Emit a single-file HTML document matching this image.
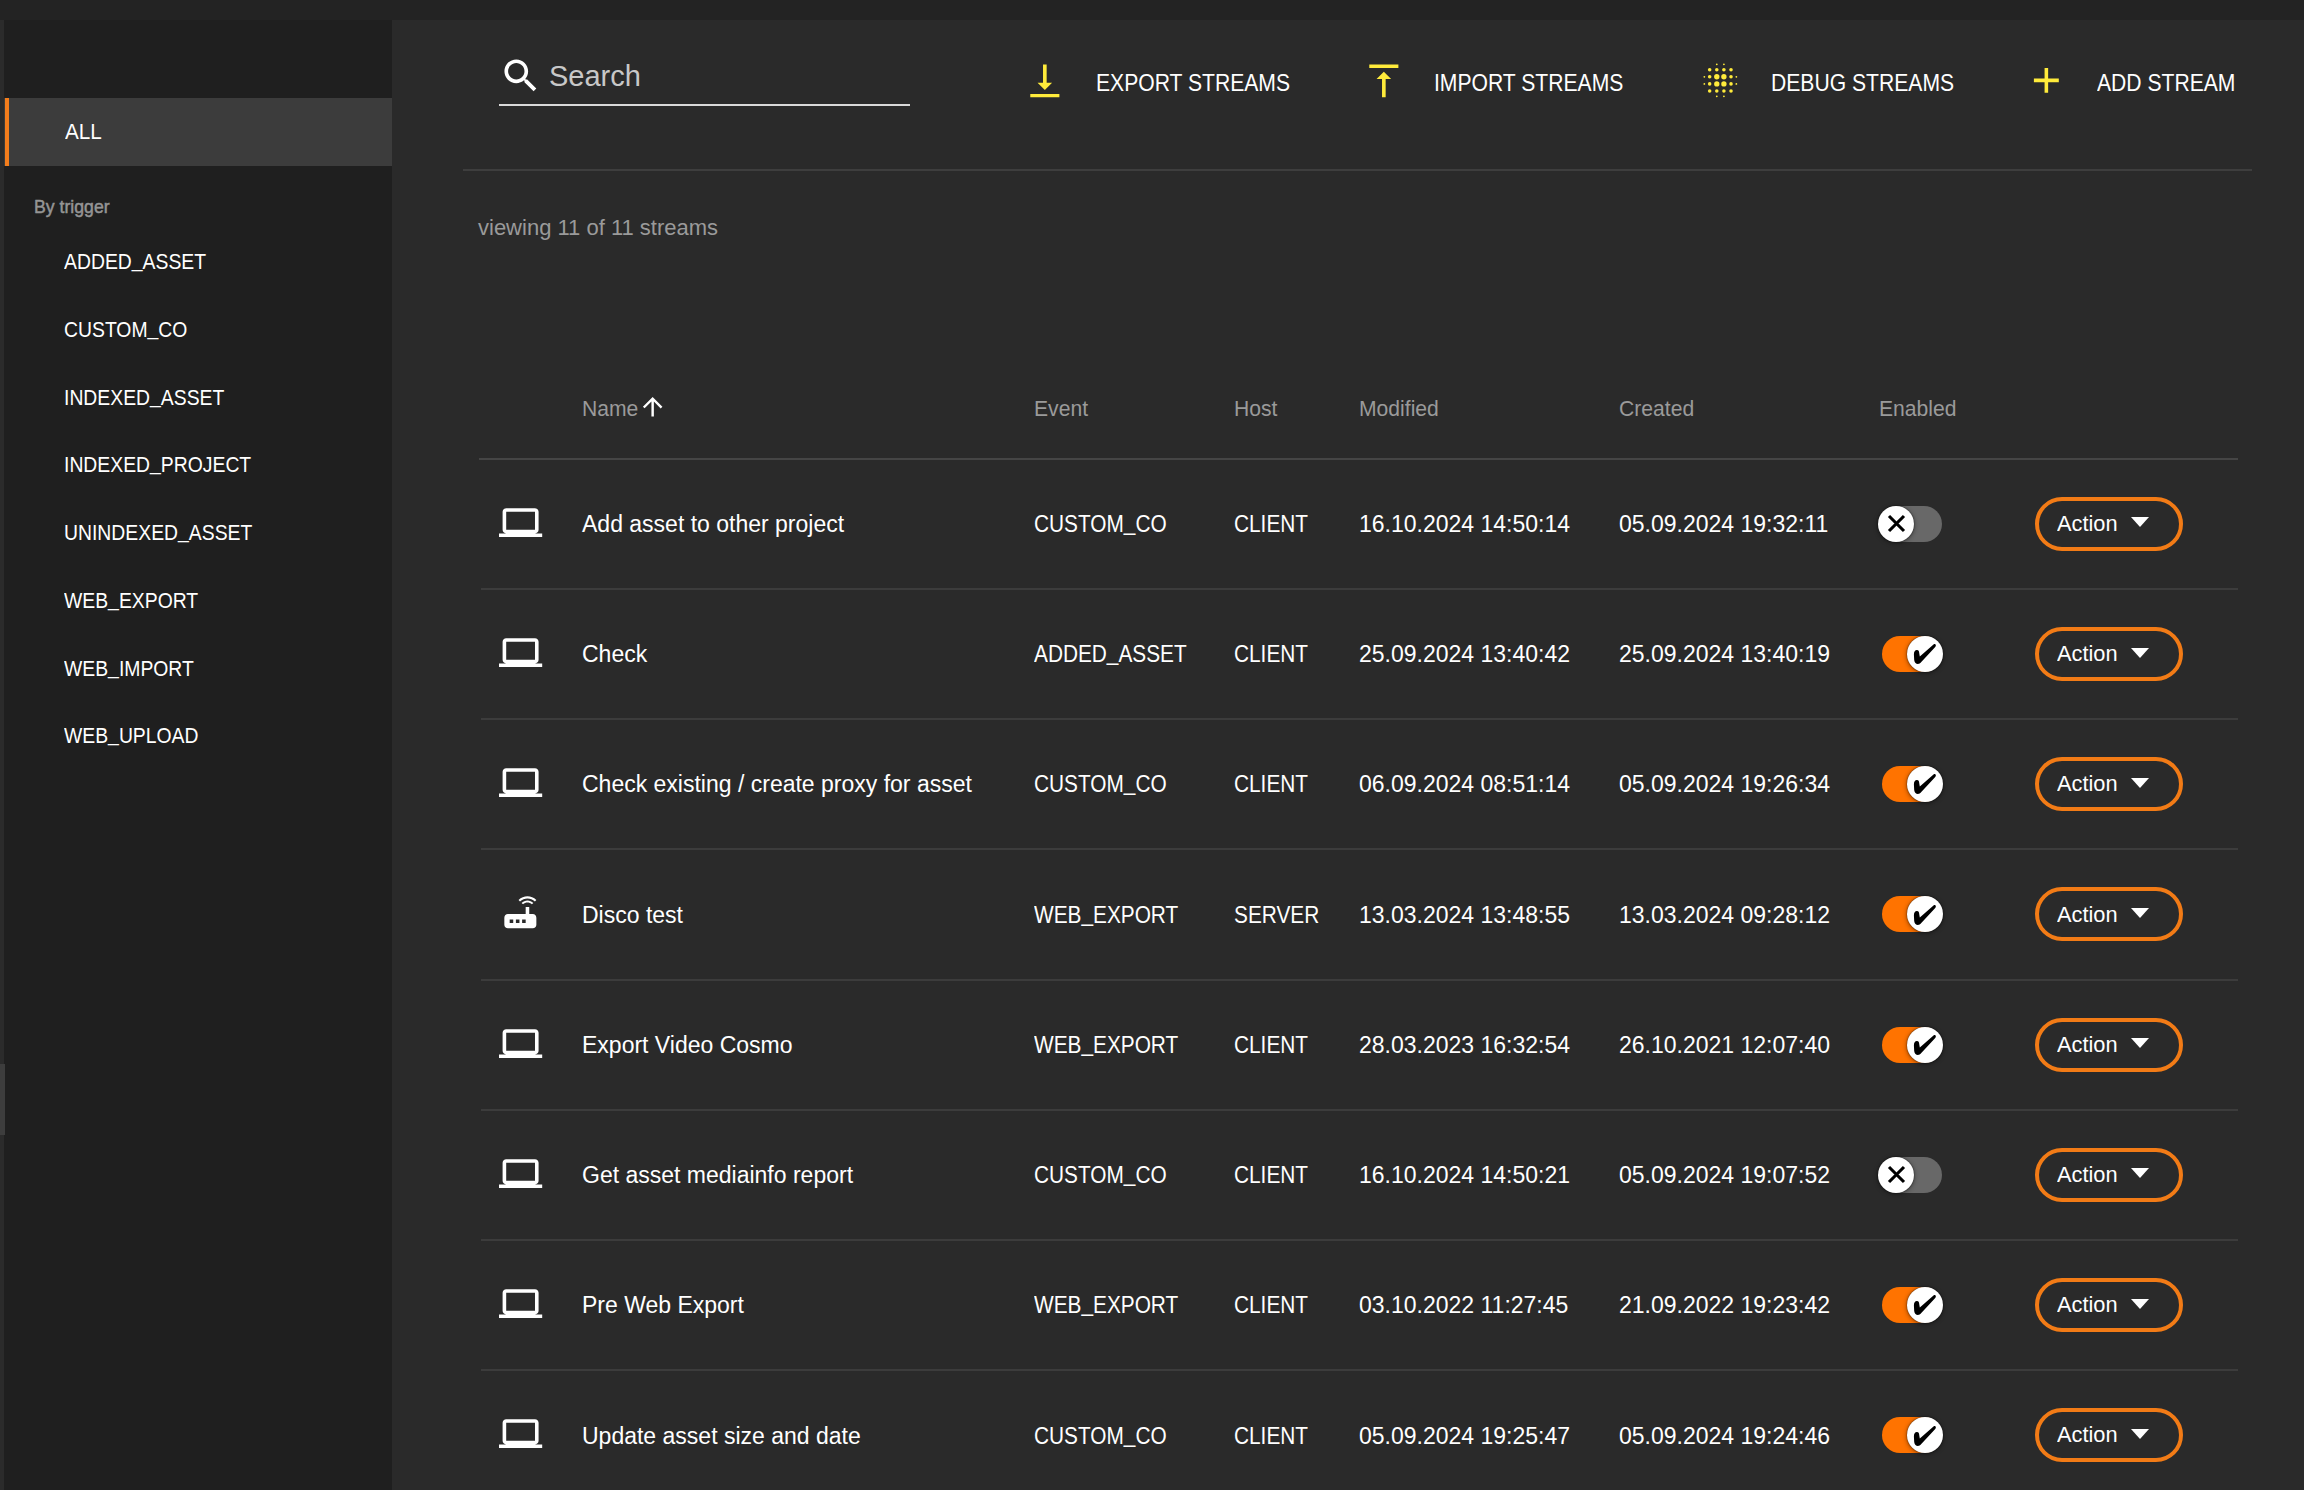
<!DOCTYPE html>
<html><head><meta charset="utf-8"><style>
html,body{margin:0;padding:0;width:2304px;height:1490px;overflow:hidden;background:#232323;font-family:"Liberation Sans", sans-serif;}
.a{position:absolute;}
.t{position:absolute;white-space:pre;line-height:1;}
svg{position:absolute;overflow:visible;}
</style></head><body>
<div class="a" style="left:0;top:20px;width:4px;height:1470px;background:#2b2b2b"></div>
<div class="a" style="left:4px;top:20px;width:388px;height:1470px;background:#1f1f1f"></div>
<div class="a" style="left:392px;top:20px;width:1912px;height:1470px;background:#2a2a2a"></div>
<div class="a" style="left:0;top:1064px;width:5px;height:71px;background:#3d3d3d"></div>
<div class="a" style="left:4px;top:98px;width:388px;height:68px;background:#3c3c3c"></div>
<div class="a" style="left:4.8px;top:98px;width:4.4px;height:68px;background:#f37d1c"></div>
<div class="t " style="left:64.5px;top:120.98px;font-size:22px;color:#fff;transform:scaleX(0.94);transform-origin:0 0;">ALL</div>
<div class="t " style="left:34px;top:197.42px;font-size:19px;color:#959595;transform:scaleX(0.93);transform-origin:0 0;-webkit-text-stroke:0.5px #959595;">By trigger</div>
<div class="t " style="left:64px;top:251.18px;font-size:22px;color:#fff;transform:scaleX(0.88);transform-origin:0 0;">ADDED<span style="position:relative;top:-2px">_</span>ASSET</div>
<div class="t " style="left:64px;top:318.93px;font-size:22px;color:#fff;transform:scaleX(0.88);transform-origin:0 0;">CUSTOM<span style="position:relative;top:-2px">_</span>CO</div>
<div class="t " style="left:64px;top:386.68px;font-size:22px;color:#fff;transform:scaleX(0.88);transform-origin:0 0;">INDEXED<span style="position:relative;top:-2px">_</span>ASSET</div>
<div class="t " style="left:64px;top:454.43px;font-size:22px;color:#fff;transform:scaleX(0.88);transform-origin:0 0;">INDEXED<span style="position:relative;top:-2px">_</span>PROJECT</div>
<div class="t " style="left:64px;top:522.18px;font-size:22px;color:#fff;transform:scaleX(0.88);transform-origin:0 0;">UNINDEXED<span style="position:relative;top:-2px">_</span>ASSET</div>
<div class="t " style="left:64px;top:589.93px;font-size:22px;color:#fff;transform:scaleX(0.88);transform-origin:0 0;">WEB<span style="position:relative;top:-2px">_</span>EXPORT</div>
<div class="t " style="left:64px;top:657.68px;font-size:22px;color:#fff;transform:scaleX(0.88);transform-origin:0 0;">WEB<span style="position:relative;top:-2px">_</span>IMPORT</div>
<div class="t " style="left:64px;top:725.43px;font-size:22px;color:#fff;transform:scaleX(0.88);transform-origin:0 0;">WEB<span style="position:relative;top:-2px">_</span>UPLOAD</div>
<svg style="left:498.8px;top:54.1px" width="43.7" height="43.7" viewBox="0 0 24 24"><path fill="#fff" d="M15.5 14h-.79l-.28-.27C15.41 12.59 16 11.11 16 9.5 16 5.910 13.09 3 9.5 3S3 5.91 3 9.5 5.91 16 9.5 16c1.61 0 3.09-.59 4.23-1.57l.27.28v.79l5 4.99L20.49 19l-4.99-5zm-6 0C7.01 14 5 11.99 5 9.5S7.01 5 9.5 5 14 7.01 14 9.5 11.99 14 9.5 14z"/></svg>
<div class="t " style="left:549px;top:62.45px;font-size:29px;color:#c8c8c8;">Search</div>
<div class="a" style="left:499px;top:104px;width:411px;height:2px;background:#d9d9d9"></div>
<svg style="left:1023.2px;top:58.7px" width="43.68" height="43.68" viewBox="0 0 24 24"><path fill="#ffeb3b" d="M16 13h-3V3h-2v10H8l4 4 4-4zM4 19.2v1.8h16v-1.8H4z"/></svg>
<div class="t " style="left:1096px;top:71.08px;font-size:24px;color:#fff;transform:scaleX(0.88);transform-origin:0 0;">EXPORT STREAMS</div>
<svg style="left:1362.1px;top:58.9px" width="43.68" height="43.68" viewBox="0 0 24 24"><path fill="#ffeb3b" d="M8 11h3v10h2V11h3l-4-4-4 4zM4 3v2h16V3H4z"/></svg>
<div class="t " style="left:1434px;top:71.08px;font-size:24px;color:#fff;transform:scaleX(0.88);transform-origin:0 0;">IMPORT STREAMS</div>
<svg style="left:1698.7px;top:58.8px" width="42.7" height="42.7" viewBox="0 0 24 24"><g fill="#ffeb3b"><circle cx="3" cy="10" r="0.5"/><circle cx="3" cy="14" r="0.5"/><circle cx="21" cy="10" r="0.5"/><circle cx="21" cy="14" r="0.5"/><circle cx="10" cy="3" r="0.5"/><circle cx="14" cy="3" r="0.5"/><circle cx="10" cy="21" r="0.5"/><circle cx="14" cy="21" r="0.5"/><circle cx="6" cy="6" r="1"/><circle cx="6" cy="10" r="1"/><circle cx="6" cy="14" r="1"/><circle cx="6" cy="18" r="1"/><circle cx="10" cy="6" r="1"/><circle cx="14" cy="6" r="1"/><circle cx="18" cy="6" r="1"/><circle cx="18" cy="10" r="1"/><circle cx="18" cy="14" r="1"/><circle cx="18" cy="18" r="1"/><circle cx="10" cy="18" r="1"/><circle cx="14" cy="18" r="1"/><circle cx="10" cy="10" r="1.5"/><circle cx="14" cy="10" r="1.5"/><circle cx="10" cy="14" r="1.5"/><circle cx="14" cy="14" r="1.5"/></g></svg>
<div class="t " style="left:1771px;top:71.08px;font-size:24px;color:#fff;transform:scaleX(0.88);transform-origin:0 0;">DEBUG STREAMS</div>
<svg style="left:2024.8px;top:59.3px" width="42.72" height="42.72" viewBox="0 0 24 24"><path fill="#ffeb3b" d="M19 13h-6v6h-2v-6H5v-2h6V5h2v6h6v2z"/></svg>
<div class="t " style="left:2097px;top:71.08px;font-size:24px;color:#fff;transform:scaleX(0.88);transform-origin:0 0;">ADD STREAM</div>
<div class="a" style="left:463px;top:169px;width:1789px;height:1.5px;background:#3e3e3e"></div>
<div class="t " style="left:478px;top:217.08px;font-size:22px;color:#9a9a9a;">viewing 11 of 11 streams</div>
<div class="t " style="left:582px;top:398.38px;font-size:22px;color:#9a9a9a;transform:scaleX(0.96);transform-origin:0 0;">Name</div>
<svg style="left:638.3px;top:392.4px" width="29.3" height="29.3" viewBox="0 0 24 24"><path fill="#fff" d="M4 12l1.41 1.41L11 7.83V20h2V7.83l5.58 5.59L20 12l-8-8-8 8z"/></svg>
<div class="t " style="left:1034px;top:398.38px;font-size:22px;color:#9a9a9a;transform:scaleX(0.96);transform-origin:0 0;">Event</div>
<div class="t " style="left:1234px;top:398.38px;font-size:22px;color:#9a9a9a;transform:scaleX(0.96);transform-origin:0 0;">Host</div>
<div class="t " style="left:1359px;top:398.38px;font-size:22px;color:#9a9a9a;transform:scaleX(0.96);transform-origin:0 0;">Modified</div>
<div class="t " style="left:1619px;top:398.38px;font-size:22px;color:#9a9a9a;transform:scaleX(0.96);transform-origin:0 0;">Created</div>
<div class="t " style="left:1879px;top:398.38px;font-size:22px;color:#9a9a9a;transform:scaleX(0.96);transform-origin:0 0;">Enabled</div>
<div class="a" style="left:479px;top:457.5px;width:1759px;height:2px;background:#454545"></div>
<svg style="left:498.7px;top:500.70px" width="43.2" height="43.2" viewBox="0 0 24 24"><path fill="#fff" d="M20 18c1.1 0 1.99-.9 1.99-2L22 6c0-1.1-.9-2-2-2H4c-1.1 0-2 .9-2 2v10c0 1.1.9 2 2 2H0v2h24v-2h-4zM4 6h16v10H4V6z"/></svg>
<div class="t " style="left:582px;top:513.03px;font-size:23px;color:#fff;">Add asset to other project</div>
<div class="t " style="left:1034px;top:513.03px;font-size:23px;color:#fff;transform:scaleX(0.905);transform-origin:0 0;">CUSTOM<span style="position:relative;top:-2px">_</span>CO</div>
<div class="t " style="left:1234px;top:513.03px;font-size:23px;color:#fff;transform:scaleX(0.905);transform-origin:0 0;">CLIENT</div>
<div class="t " style="left:1359px;top:513.03px;font-size:23px;color:#fff;">16.10.2024 14:50:14</div>
<div class="t " style="left:1619px;top:513.03px;font-size:23px;color:#fff;">05.09.2024 19:32:11</div>
<div class="a" style="left:1882px;top:505.80px;width:60px;height:36px;border-radius:18px;background:#686868"></div>
<div class="a" style="left:1878px;top:505.80px;width:36px;height:36px;border-radius:18px;background:#fff;box-shadow:0 1px 5px rgba(0,0,0,.45),0 0 1.5px rgba(0,0,0,.8)"></div>
<svg style="left:1888px;top:515.30px" width="17" height="17" viewBox="0 0 17 17"><path stroke="#000" stroke-width="3.1" d="M1 1L16 16M16 1L1 16"/></svg>
<div class="a" style="left:2035px;top:496.80px;width:140px;height:46px;border:4px solid #f27b16;border-radius:27px"></div>
<div class="t " style="left:2057px;top:512.88px;font-size:22px;color:#fff;transform:scaleX(0.99);transform-origin:0 0;">Action</div>
<svg style="left:2130.5px;top:517.30px" width="18" height="10" viewBox="0 0 18 10"><path fill="#fff" d="M0 0h18L9 10z"/></svg>
<div class="a" style="left:481px;top:588.00px;width:1757px;height:2px;background:#3c3c3c"></div>
<svg style="left:498.7px;top:630.93px" width="43.2" height="43.2" viewBox="0 0 24 24"><path fill="#fff" d="M20 18c1.1 0 1.99-.9 1.99-2L22 6c0-1.1-.9-2-2-2H4c-1.1 0-2 .9-2 2v10c0 1.1.9 2 2 2H0v2h24v-2h-4zM4 6h16v10H4V6z"/></svg>
<div class="t " style="left:582px;top:643.26px;font-size:23px;color:#fff;">Check</div>
<div class="t " style="left:1034px;top:643.26px;font-size:23px;color:#fff;transform:scaleX(0.905);transform-origin:0 0;">ADDED<span style="position:relative;top:-2px">_</span>ASSET</div>
<div class="t " style="left:1234px;top:643.26px;font-size:23px;color:#fff;transform:scaleX(0.905);transform-origin:0 0;">CLIENT</div>
<div class="t " style="left:1359px;top:643.26px;font-size:23px;color:#fff;">25.09.2024 13:40:42</div>
<div class="t " style="left:1619px;top:643.26px;font-size:23px;color:#fff;">25.09.2024 13:40:19</div>
<div class="a" style="left:1882px;top:636.03px;width:60px;height:36px;border-radius:18px;background:#ff7300"></div>
<div class="a" style="left:1907px;top:636.03px;width:36px;height:36px;border-radius:18px;background:#fff;box-shadow:0 1px 5px rgba(0,0,0,.45),0 0 1.5px rgba(0,0,0,.8)"></div>
<svg style="left:1908px;top:638.13px" width="34" height="30" viewBox="0 0 34 30"><path fill="#000" d="M5.9 16.5C5.9 13.5 7 12 8.9 12 10.8 12 11.2 13.6 11.3 15.5L11.8 18.6 25.5 6.6C26.5 5.8 27.6 6 27.8 7 28 7.8 27.6 8.5 27 9.2L13.5 23.8C12.3 25.2 11 26 9.9 26 8 26 6.5 24.5 6.2 22Z"/></svg>
<div class="a" style="left:2035px;top:627.03px;width:140px;height:46px;border:4px solid #f27b16;border-radius:27px"></div>
<div class="t " style="left:2057px;top:643.11px;font-size:22px;color:#fff;transform:scaleX(0.99);transform-origin:0 0;">Action</div>
<svg style="left:2130.5px;top:647.53px" width="18" height="10" viewBox="0 0 18 10"><path fill="#fff" d="M0 0h18L9 10z"/></svg>
<div class="a" style="left:481px;top:718.23px;width:1757px;height:2px;background:#3c3c3c"></div>
<svg style="left:498.7px;top:761.16px" width="43.2" height="43.2" viewBox="0 0 24 24"><path fill="#fff" d="M20 18c1.1 0 1.99-.9 1.99-2L22 6c0-1.1-.9-2-2-2H4c-1.1 0-2 .9-2 2v10c0 1.1.9 2 2 2H0v2h24v-2h-4zM4 6h16v10H4V6z"/></svg>
<div class="t " style="left:582px;top:773.49px;font-size:23px;color:#fff;">Check existing / create proxy for asset</div>
<div class="t " style="left:1034px;top:773.49px;font-size:23px;color:#fff;transform:scaleX(0.905);transform-origin:0 0;">CUSTOM<span style="position:relative;top:-2px">_</span>CO</div>
<div class="t " style="left:1234px;top:773.49px;font-size:23px;color:#fff;transform:scaleX(0.905);transform-origin:0 0;">CLIENT</div>
<div class="t " style="left:1359px;top:773.49px;font-size:23px;color:#fff;">06.09.2024 08:51:14</div>
<div class="t " style="left:1619px;top:773.49px;font-size:23px;color:#fff;">05.09.2024 19:26:34</div>
<div class="a" style="left:1882px;top:766.26px;width:60px;height:36px;border-radius:18px;background:#ff7300"></div>
<div class="a" style="left:1907px;top:766.26px;width:36px;height:36px;border-radius:18px;background:#fff;box-shadow:0 1px 5px rgba(0,0,0,.45),0 0 1.5px rgba(0,0,0,.8)"></div>
<svg style="left:1908px;top:768.36px" width="34" height="30" viewBox="0 0 34 30"><path fill="#000" d="M5.9 16.5C5.9 13.5 7 12 8.9 12 10.8 12 11.2 13.6 11.3 15.5L11.8 18.6 25.5 6.6C26.5 5.8 27.6 6 27.8 7 28 7.8 27.6 8.5 27 9.2L13.5 23.8C12.3 25.2 11 26 9.9 26 8 26 6.5 24.5 6.2 22Z"/></svg>
<div class="a" style="left:2035px;top:757.26px;width:140px;height:46px;border:4px solid #f27b16;border-radius:27px"></div>
<div class="t " style="left:2057px;top:773.34px;font-size:22px;color:#fff;transform:scaleX(0.99);transform-origin:0 0;">Action</div>
<svg style="left:2130.5px;top:777.76px" width="18" height="10" viewBox="0 0 18 10"><path fill="#fff" d="M0 0h18L9 10z"/></svg>
<div class="a" style="left:481px;top:848.46px;width:1757px;height:2px;background:#3c3c3c"></div>
<svg style="left:498.8px;top:890.89px" width="42.7" height="42.7" viewBox="0 0 24 24"><path fill="#fff" d="M20.2 5.9l.8-.8C19.6 3.7 17.8 3 16 3s-3.6.7-5 2.1l.8.8C13 4.8 14.5 4.2 16 4.2s3 .6 4.2 1.7zm-.9.8c-.9-.9-2.1-1.4-3.3-1.4s-2.4.5-3.3 1.4l.8.8c.7-.7 1.6-1 2.5-1 .9 0 1.8.3 2.5 1l.8-.8zM19 13h-2V9h-2v4H5c-1.1 0-2 .9-2 2v4c0 1.1.9 2 2 2h14c1.1 0 2-.9 2-2v-4c0-1.1-.9-2-2-2zM8 18H6v-2h2v2zm3.5 0h-2v-2h2v2zm3.5 0h-2v-2h2v2z"/></svg>
<div class="t " style="left:582px;top:903.72px;font-size:23px;color:#fff;">Disco test</div>
<div class="t " style="left:1034px;top:903.72px;font-size:23px;color:#fff;transform:scaleX(0.905);transform-origin:0 0;">WEB<span style="position:relative;top:-2px">_</span>EXPORT</div>
<div class="t " style="left:1234px;top:903.72px;font-size:23px;color:#fff;transform:scaleX(0.905);transform-origin:0 0;">SERVER</div>
<div class="t " style="left:1359px;top:903.72px;font-size:23px;color:#fff;">13.03.2024 13:48:55</div>
<div class="t " style="left:1619px;top:903.72px;font-size:23px;color:#fff;">13.03.2024 09:28:12</div>
<div class="a" style="left:1882px;top:896.49px;width:60px;height:36px;border-radius:18px;background:#ff7300"></div>
<div class="a" style="left:1907px;top:896.49px;width:36px;height:36px;border-radius:18px;background:#fff;box-shadow:0 1px 5px rgba(0,0,0,.45),0 0 1.5px rgba(0,0,0,.8)"></div>
<svg style="left:1908px;top:898.59px" width="34" height="30" viewBox="0 0 34 30"><path fill="#000" d="M5.9 16.5C5.9 13.5 7 12 8.9 12 10.8 12 11.2 13.6 11.3 15.5L11.8 18.6 25.5 6.6C26.5 5.8 27.6 6 27.8 7 28 7.8 27.6 8.5 27 9.2L13.5 23.8C12.3 25.2 11 26 9.9 26 8 26 6.5 24.5 6.2 22Z"/></svg>
<div class="a" style="left:2035px;top:887.49px;width:140px;height:46px;border:4px solid #f27b16;border-radius:27px"></div>
<div class="t " style="left:2057px;top:903.57px;font-size:22px;color:#fff;transform:scaleX(0.99);transform-origin:0 0;">Action</div>
<svg style="left:2130.5px;top:907.99px" width="18" height="10" viewBox="0 0 18 10"><path fill="#fff" d="M0 0h18L9 10z"/></svg>
<div class="a" style="left:481px;top:978.69px;width:1757px;height:2px;background:#3c3c3c"></div>
<svg style="left:498.7px;top:1021.62px" width="43.2" height="43.2" viewBox="0 0 24 24"><path fill="#fff" d="M20 18c1.1 0 1.99-.9 1.99-2L22 6c0-1.1-.9-2-2-2H4c-1.1 0-2 .9-2 2v10c0 1.1.9 2 2 2H0v2h24v-2h-4zM4 6h16v10H4V6z"/></svg>
<div class="t " style="left:582px;top:1033.95px;font-size:23px;color:#fff;">Export Video Cosmo</div>
<div class="t " style="left:1034px;top:1033.95px;font-size:23px;color:#fff;transform:scaleX(0.905);transform-origin:0 0;">WEB<span style="position:relative;top:-2px">_</span>EXPORT</div>
<div class="t " style="left:1234px;top:1033.95px;font-size:23px;color:#fff;transform:scaleX(0.905);transform-origin:0 0;">CLIENT</div>
<div class="t " style="left:1359px;top:1033.95px;font-size:23px;color:#fff;">28.03.2023 16:32:54</div>
<div class="t " style="left:1619px;top:1033.95px;font-size:23px;color:#fff;">26.10.2021 12:07:40</div>
<div class="a" style="left:1882px;top:1026.72px;width:60px;height:36px;border-radius:18px;background:#ff7300"></div>
<div class="a" style="left:1907px;top:1026.72px;width:36px;height:36px;border-radius:18px;background:#fff;box-shadow:0 1px 5px rgba(0,0,0,.45),0 0 1.5px rgba(0,0,0,.8)"></div>
<svg style="left:1908px;top:1028.82px" width="34" height="30" viewBox="0 0 34 30"><path fill="#000" d="M5.9 16.5C5.9 13.5 7 12 8.9 12 10.8 12 11.2 13.6 11.3 15.5L11.8 18.6 25.5 6.6C26.5 5.8 27.6 6 27.8 7 28 7.8 27.6 8.5 27 9.2L13.5 23.8C12.3 25.2 11 26 9.9 26 8 26 6.5 24.5 6.2 22Z"/></svg>
<div class="a" style="left:2035px;top:1017.72px;width:140px;height:46px;border:4px solid #f27b16;border-radius:27px"></div>
<div class="t " style="left:2057px;top:1033.80px;font-size:22px;color:#fff;transform:scaleX(0.99);transform-origin:0 0;">Action</div>
<svg style="left:2130.5px;top:1038.22px" width="18" height="10" viewBox="0 0 18 10"><path fill="#fff" d="M0 0h18L9 10z"/></svg>
<div class="a" style="left:481px;top:1108.92px;width:1757px;height:2px;background:#3c3c3c"></div>
<svg style="left:498.7px;top:1151.85px" width="43.2" height="43.2" viewBox="0 0 24 24"><path fill="#fff" d="M20 18c1.1 0 1.99-.9 1.99-2L22 6c0-1.1-.9-2-2-2H4c-1.1 0-2 .9-2 2v10c0 1.1.9 2 2 2H0v2h24v-2h-4zM4 6h16v10H4V6z"/></svg>
<div class="t " style="left:582px;top:1164.18px;font-size:23px;color:#fff;">Get asset mediainfo report</div>
<div class="t " style="left:1034px;top:1164.18px;font-size:23px;color:#fff;transform:scaleX(0.905);transform-origin:0 0;">CUSTOM<span style="position:relative;top:-2px">_</span>CO</div>
<div class="t " style="left:1234px;top:1164.18px;font-size:23px;color:#fff;transform:scaleX(0.905);transform-origin:0 0;">CLIENT</div>
<div class="t " style="left:1359px;top:1164.18px;font-size:23px;color:#fff;">16.10.2024 14:50:21</div>
<div class="t " style="left:1619px;top:1164.18px;font-size:23px;color:#fff;">05.09.2024 19:07:52</div>
<div class="a" style="left:1882px;top:1156.95px;width:60px;height:36px;border-radius:18px;background:#686868"></div>
<div class="a" style="left:1878px;top:1156.95px;width:36px;height:36px;border-radius:18px;background:#fff;box-shadow:0 1px 5px rgba(0,0,0,.45),0 0 1.5px rgba(0,0,0,.8)"></div>
<svg style="left:1888px;top:1166.45px" width="17" height="17" viewBox="0 0 17 17"><path stroke="#000" stroke-width="3.1" d="M1 1L16 16M16 1L1 16"/></svg>
<div class="a" style="left:2035px;top:1147.95px;width:140px;height:46px;border:4px solid #f27b16;border-radius:27px"></div>
<div class="t " style="left:2057px;top:1164.03px;font-size:22px;color:#fff;transform:scaleX(0.99);transform-origin:0 0;">Action</div>
<svg style="left:2130.5px;top:1168.45px" width="18" height="10" viewBox="0 0 18 10"><path fill="#fff" d="M0 0h18L9 10z"/></svg>
<div class="a" style="left:481px;top:1239.15px;width:1757px;height:2px;background:#3c3c3c"></div>
<svg style="left:498.7px;top:1282.08px" width="43.2" height="43.2" viewBox="0 0 24 24"><path fill="#fff" d="M20 18c1.1 0 1.99-.9 1.99-2L22 6c0-1.1-.9-2-2-2H4c-1.1 0-2 .9-2 2v10c0 1.1.9 2 2 2H0v2h24v-2h-4zM4 6h16v10H4V6z"/></svg>
<div class="t " style="left:582px;top:1294.41px;font-size:23px;color:#fff;">Pre Web Export</div>
<div class="t " style="left:1034px;top:1294.41px;font-size:23px;color:#fff;transform:scaleX(0.905);transform-origin:0 0;">WEB<span style="position:relative;top:-2px">_</span>EXPORT</div>
<div class="t " style="left:1234px;top:1294.41px;font-size:23px;color:#fff;transform:scaleX(0.905);transform-origin:0 0;">CLIENT</div>
<div class="t " style="left:1359px;top:1294.41px;font-size:23px;color:#fff;">03.10.2022 11:27:45</div>
<div class="t " style="left:1619px;top:1294.41px;font-size:23px;color:#fff;">21.09.2022 19:23:42</div>
<div class="a" style="left:1882px;top:1287.18px;width:60px;height:36px;border-radius:18px;background:#ff7300"></div>
<div class="a" style="left:1907px;top:1287.18px;width:36px;height:36px;border-radius:18px;background:#fff;box-shadow:0 1px 5px rgba(0,0,0,.45),0 0 1.5px rgba(0,0,0,.8)"></div>
<svg style="left:1908px;top:1289.28px" width="34" height="30" viewBox="0 0 34 30"><path fill="#000" d="M5.9 16.5C5.9 13.5 7 12 8.9 12 10.8 12 11.2 13.6 11.3 15.5L11.8 18.6 25.5 6.6C26.5 5.8 27.6 6 27.8 7 28 7.8 27.6 8.5 27 9.2L13.5 23.8C12.3 25.2 11 26 9.9 26 8 26 6.5 24.5 6.2 22Z"/></svg>
<div class="a" style="left:2035px;top:1278.18px;width:140px;height:46px;border:4px solid #f27b16;border-radius:27px"></div>
<div class="t " style="left:2057px;top:1294.26px;font-size:22px;color:#fff;transform:scaleX(0.99);transform-origin:0 0;">Action</div>
<svg style="left:2130.5px;top:1298.68px" width="18" height="10" viewBox="0 0 18 10"><path fill="#fff" d="M0 0h18L9 10z"/></svg>
<div class="a" style="left:481px;top:1369.38px;width:1757px;height:2px;background:#3c3c3c"></div>
<svg style="left:498.7px;top:1412.31px" width="43.2" height="43.2" viewBox="0 0 24 24"><path fill="#fff" d="M20 18c1.1 0 1.99-.9 1.99-2L22 6c0-1.1-.9-2-2-2H4c-1.1 0-2 .9-2 2v10c0 1.1.9 2 2 2H0v2h24v-2h-4zM4 6h16v10H4V6z"/></svg>
<div class="t " style="left:582px;top:1424.64px;font-size:23px;color:#fff;">Update asset size and date</div>
<div class="t " style="left:1034px;top:1424.64px;font-size:23px;color:#fff;transform:scaleX(0.905);transform-origin:0 0;">CUSTOM<span style="position:relative;top:-2px">_</span>CO</div>
<div class="t " style="left:1234px;top:1424.64px;font-size:23px;color:#fff;transform:scaleX(0.905);transform-origin:0 0;">CLIENT</div>
<div class="t " style="left:1359px;top:1424.64px;font-size:23px;color:#fff;">05.09.2024 19:25:47</div>
<div class="t " style="left:1619px;top:1424.64px;font-size:23px;color:#fff;">05.09.2024 19:24:46</div>
<div class="a" style="left:1882px;top:1417.41px;width:60px;height:36px;border-radius:18px;background:#ff7300"></div>
<div class="a" style="left:1907px;top:1417.41px;width:36px;height:36px;border-radius:18px;background:#fff;box-shadow:0 1px 5px rgba(0,0,0,.45),0 0 1.5px rgba(0,0,0,.8)"></div>
<svg style="left:1908px;top:1419.51px" width="34" height="30" viewBox="0 0 34 30"><path fill="#000" d="M5.9 16.5C5.9 13.5 7 12 8.9 12 10.8 12 11.2 13.6 11.3 15.5L11.8 18.6 25.5 6.6C26.5 5.8 27.6 6 27.8 7 28 7.8 27.6 8.5 27 9.2L13.5 23.8C12.3 25.2 11 26 9.9 26 8 26 6.5 24.5 6.2 22Z"/></svg>
<div class="a" style="left:2035px;top:1408.41px;width:140px;height:46px;border:4px solid #f27b16;border-radius:27px"></div>
<div class="t " style="left:2057px;top:1424.49px;font-size:22px;color:#fff;transform:scaleX(0.99);transform-origin:0 0;">Action</div>
<svg style="left:2130.5px;top:1428.91px" width="18" height="10" viewBox="0 0 18 10"><path fill="#fff" d="M0 0h18L9 10z"/></svg>
</body></html>
